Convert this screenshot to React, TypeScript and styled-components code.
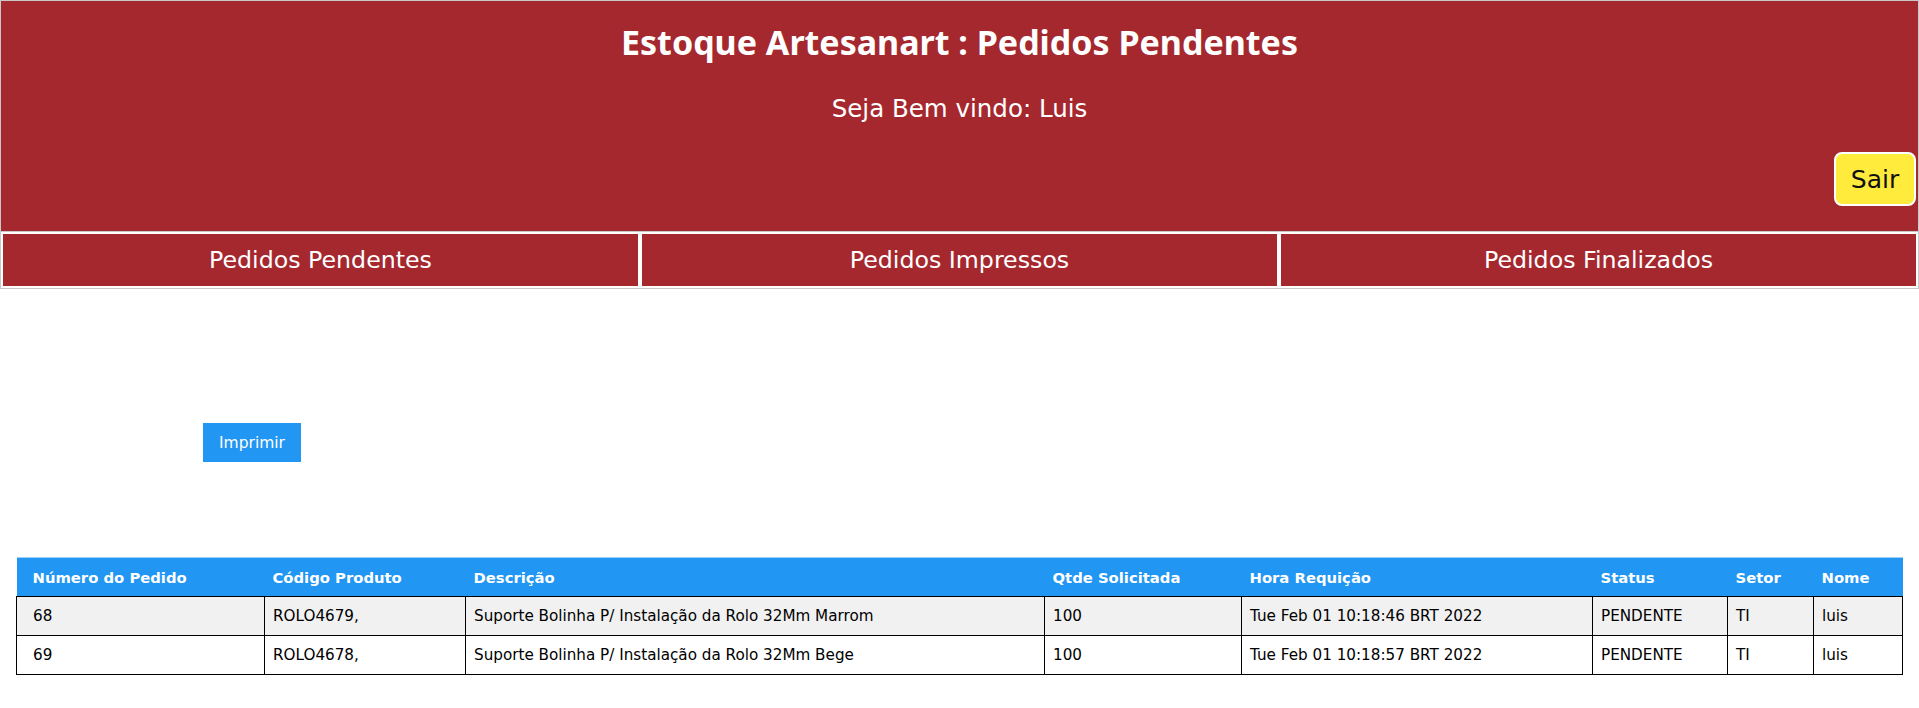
import React from "react";
import styled, { createGlobalStyle } from "styled-components";

const GlobalStyle = createGlobalStyle`
  body {
    margin: 0;
    background: #fff;
    font-family: "DejaVu Sans", Tahoma, sans-serif;
  }
`;

const Header = styled.header`
  box-sizing: border-box;
  height: 232px;
  background: #a5282e;
  border: 1px solid #c8c8c8;
  display: flex;
  flex-direction: column;
  align-items: center;
  color: #fff;
`;

const Title = styled.h1`
  margin: 21px 0 0;
  font-family: "Noto Sans", "Open Sans", sans-serif;
  font-size: 34px;
  line-height: 40px;
  font-weight: 700;
`;

const Welcome = styled.p`
  margin: 32px 0 0;
  font-size: 24.5px;
  line-height: 30px;
`;

const LogoutButton = styled.button`
  align-self: flex-end;
  margin: 28px 2px 0 0;
  box-sizing: border-box;
  width: 82px;
  height: 54px;
  background: #ffeb3b;
  border: 2px solid #fff;
  border-radius: 8px;
  color: #111;
  font-family: "DejaVu Sans", Tahoma, sans-serif;
  font-size: 25px;
  cursor: pointer;
`;

const Nav = styled.nav`
  display: grid;
  grid-template-columns: repeat(3, 1fr);
  border: 1px solid #c8c8c8;
  border-top: none;
`;

const NavItem = styled.a`
  box-sizing: border-box;
  height: 56px;
  display: flex;
  align-items: center;
  justify-content: center;
  background: #a5282e;
  border: 2px solid #fff;
  color: #fff;
  font-size: 23.7px;
  text-decoration: none;
  cursor: pointer;
`;

const Content = styled.main`
  padding: 134px 0 0 16px;
`;

const PrintButton = styled.button`
  display: block;
  margin-left: 187px;
  width: 98px;
  height: 39px;
  background: #2196f3;
  border: none;
  color: #fff;
  font-family: "DejaVu Sans", Tahoma, sans-serif;
  font-size: 15.5px;
  cursor: pointer;
`;

const Table = styled.table`
  margin-top: 95px;
  width: 1886px;
  border-collapse: collapse;
  table-layout: fixed;
`;

const Col = styled.col<{ $w: number }>`
  width: ${p => p.$w}px;
`;

const Th = styled.th`
  height: 38px;
  padding: 0 8px;
  background: #2196f3;
  color: #fff;
  font-size: 14.8px;
  font-weight: 700;
  text-align: left;
  border-top: 1px solid #9fcdf5;
  &:first-child {
    padding-left: 16px;
  }
`;

const Row = styled.tr<{ $alt: boolean }>`
  background: ${p => (p.$alt ? "#f1f1f1" : "#fff")};
`;

const Td = styled.td`
  height: 38px;
  padding: 0 8px;
  border: 1px solid #000;
  color: #000;
  font-size: 15.2px;
  &:first-child {
    padding-left: 16px;
  }
`;

const columns = [
  { label: "Número do Pedido", w: 248 },
  { label: "Código Produto", w: 201 },
  { label: "Descrição", w: 579 },
  { label: "Qtde Solicitada", w: 197 },
  { label: "Hora Requição", w: 351 },
  { label: "Status", w: 135 },
  { label: "Setor", w: 86 },
  { label: "Nome", w: 89 },
];

const pedidos = [
  ["68", "ROLO4679,", "Suporte Bolinha P/ Instalação da Rolo 32Mm Marrom", "100", "Tue Feb 01 10:18:46 BRT 2022", "PENDENTE", "TI", "luis"],
  ["69", "ROLO4678,", "Suporte Bolinha P/ Instalação da Rolo 32Mm Bege", "100", "Tue Feb 01 10:18:57 BRT 2022", "PENDENTE", "TI", "luis"],
];

export default function App(): JSX.Element {
  return (
    <>
      <GlobalStyle />
      <Header>
        <Title>Estoque Artesanart : Pedidos Pendentes</Title>
        <Welcome>Seja Bem vindo: Luis</Welcome>
        <LogoutButton>Sair</LogoutButton>
      </Header>
      <Nav>
        <NavItem>Pedidos Pendentes</NavItem>
        <NavItem>Pedidos Impressos</NavItem>
        <NavItem>Pedidos Finalizados</NavItem>
      </Nav>
      <Content>
        <PrintButton>Imprimir</PrintButton>
        <Table>
          <colgroup>
            {columns.map(c => (
              <Col key={c.label} $w={c.w} />
            ))}
          </colgroup>
          <thead>
            <tr>
              {columns.map(c => (
                <Th key={c.label}>{c.label}</Th>
              ))}
            </tr>
          </thead>
          <tbody>
            {pedidos.map((p, i) => (
              <Row key={p[0]} $alt={i % 2 === 0}>
                {p.map((v, j) => (
                  <Td key={j}>{v}</Td>
                ))}
              </Row>
            ))}
          </tbody>
        </Table>
      </Content>
    </>
  );
}
